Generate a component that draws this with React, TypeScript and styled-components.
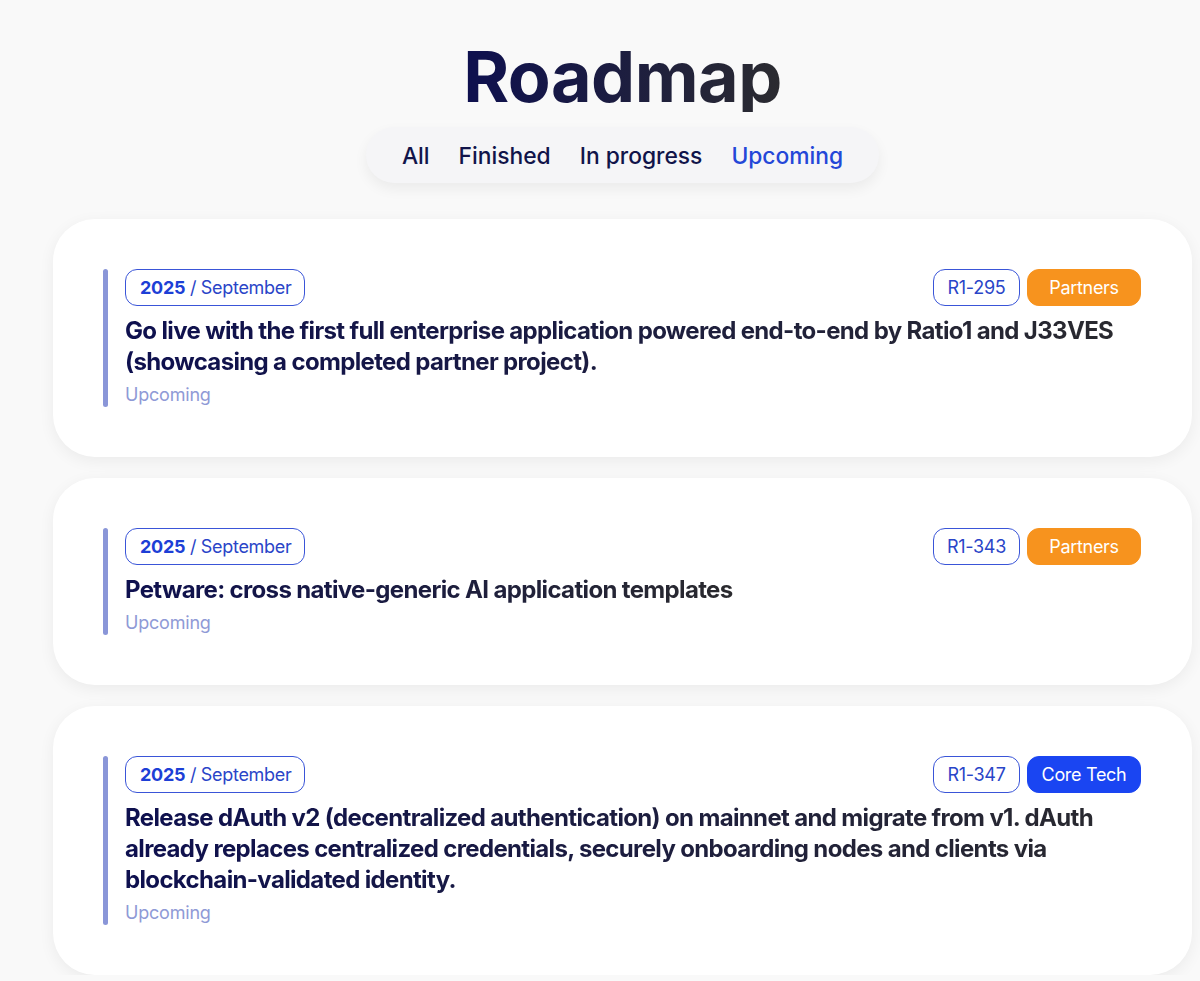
import React from "react";
import styled, { createGlobalStyle } from "styled-components";

const GlobalStyle = createGlobalStyle`
  html, body {
    margin: 0;
    padding: 0;
    background: #f9f9f9;
    font-family: Inter, "Noto Sans", sans-serif;
  }
`;

const Page = styled.div`
  width: 1139px;
  margin-left: 53px;
  padding-top: 42px;
  display: flex;
  flex-direction: column;
  align-items: center;
`;

const Title = styled.h1`
  margin: 0;
  font-size: 70px;
  line-height: 70px;
  font-weight: 700;
  letter-spacing: -0.5px;
  background: linear-gradient(90deg, #0e104f 0%, #2b2b30 100%);
  -webkit-background-clip: text;
  background-clip: text;
  color: transparent;
`;

const Filters = styled.nav`
  margin-top: 15px;
  height: 56px;
  box-sizing: border-box;
  padding: 0 36px;
  display: flex;
  align-items: center;
  gap: 29px;
  background: #f5f5f7;
  border-radius: 28px;
  box-shadow: 0 6px 14px rgba(0, 0, 0, 0.06);
`;

const FilterItem = styled.span<{ $active?: boolean }>`
  font-size: 22.8px;
  font-weight: 500;
  color: ${(p) => (p.$active ? "#2447d8" : "#11144a")};
  cursor: pointer;
`;

const List = styled.div`
  margin-top: 36px;
  width: 100%;
  display: flex;
  flex-direction: column;
  gap: 21px;
`;

const Card = styled.article`
  background: #ffffff;
  border-radius: 42px;
  padding: 50px 51px 50px 50px;
  box-shadow: 0 4px 16px rgba(0, 0, 0, 0.06);
`;

const Inner = styled.div`
  display: flex;
  gap: 17px;
`;

const Bar = styled.div`
  width: 5px;
  flex: none;
  border-radius: 3px;
  background: #8a96d8;
`;

const Body = styled.div`
  flex: 1;
  display: flex;
  flex-direction: column;
`;

const TopRow = styled.div`
  display: flex;
  justify-content: space-between;
  align-items: center;
`;

const DatePill = styled.span`
  height: 37px;
  box-sizing: border-box;
  display: inline-flex;
  align-items: center;
  padding: 0 13px 0 14px;
  border: 1px solid #3a55d8;
  border-radius: 12px;
  font-size: 18px;
  color: #2a45c8;
  letter-spacing: -0.3px;
  white-space: pre;
`;

const Year = styled.b`
  font-weight: 700;
  color: #1d3fd6;
`;

const Tags = styled.div`
  display: flex;
  gap: 7px;
`;

const Tag = styled.span<{ $bg?: string }>`
  height: 37px;
  width: ${(p) => (p.$bg ? "114px" : "87px")};
  box-sizing: border-box;
  display: inline-flex;
  align-items: center;
  justify-content: center;
  border-radius: 12px;
  font-size: 18px;
  letter-spacing: -0.3px;
  border: 1px solid ${(p) => p.$bg ?? "#3a55d8"};
  background: ${(p) => p.$bg ?? "transparent"};
  color: ${(p) => (p.$bg ? "#ffffff" : "#2a45c8")};
`;

const ItemTitle = styled.h2`
  margin: 9px 0 0;
  font-size: 24px;
  line-height: 31px;
  font-weight: 700;
  letter-spacing: -0.65px;
  background: linear-gradient(90deg, #0e104f 0%, #2a2a2e 100%);
  -webkit-background-clip: text;
  background-clip: text;
  color: transparent;
  align-self: flex-start;
`;

const Status = styled.span`
  margin-top: 6px;
  font-size: 18px;
  line-height: 24px;
  color: #8f9ad6;
  letter-spacing: -0.2px;
`;

type Item = {
  id: string;
  tag: string;
  tagColor: string;
  title: string;
};

const items: Item[] = [
  {
    id: "R1-295",
    tag: "Partners",
    tagColor: "#f7931e",
    title:
      "Go live with the first full enterprise application powered end-to-end by Ratio1 and J33VES (showcasing a completed partner project).",
  },
  {
    id: "R1-343",
    tag: "Partners",
    tagColor: "#f7931e",
    title: "Petware: cross native-generic AI application templates",
  },
  {
    id: "R1-347",
    tag: "Core Tech",
    tagColor: "#1a45f2",
    title:
      "Release dAuth v2 (decentralized authentication) on mainnet and migrate from v1. dAuth already replaces centralized credentials, securely onboarding nodes and clients via blockchain-validated identity.",
  },
];

export default function App() {
  return (
    <>
      <GlobalStyle />
      <Page>
        <Title>Roadmap</Title>
        <Filters>
          <FilterItem>All</FilterItem>
          <FilterItem>Finished</FilterItem>
          <FilterItem>In progress</FilterItem>
          <FilterItem $active>Upcoming</FilterItem>
        </Filters>
        <List>
          {items.map((it) => (
            <Card key={it.id}>
              <Inner>
                <Bar />
                <Body>
                  <TopRow>
                    <DatePill>
                      <Year>2025</Year> / September
                    </DatePill>
                    <Tags>
                      <Tag>{it.id}</Tag>
                      <Tag $bg={it.tagColor}>{it.tag}</Tag>
                    </Tags>
                  </TopRow>
                  <ItemTitle>{it.title}</ItemTitle>
                  <Status>Upcoming</Status>
                </Body>
              </Inner>
            </Card>
          ))}
        </List>
      </Page>
    </>
  );
}
